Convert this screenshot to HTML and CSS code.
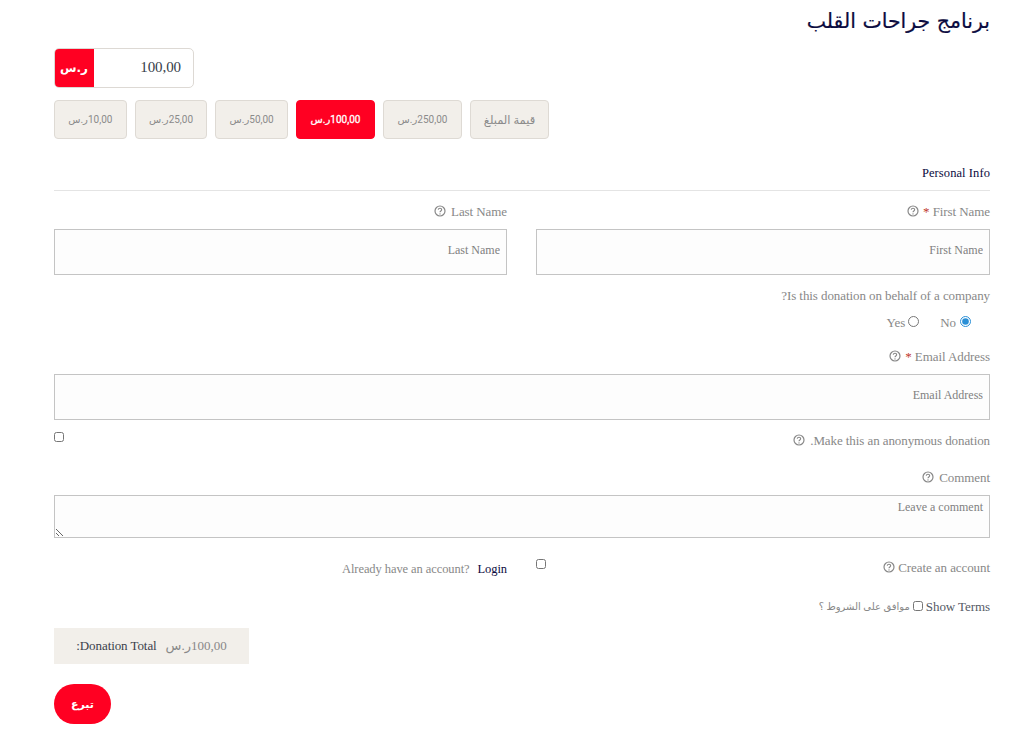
FILE: index.html
```html
<!DOCTYPE html>
<html lang="ar" dir="rtl">
<head>
<meta charset="utf-8">
<title>برنامج جراحات القلب</title>
<link rel="stylesheet" href="styles.css">
</head>
<body>
<svg class="sprite" width="0" height="0" aria-hidden="true">
  <symbol id="help" viewBox="0 0 12 12">
    <circle cx="6" cy="6" r="5" fill="none" stroke="currentColor" stroke-width="1.2"/>
    <path d="M4.3 4.8C4.3 3.8 5 3.2 6 3.2s1.7.6 1.7 1.5c0 1.2-1.7 1.3-1.7 2.5" fill="none" stroke="currentColor" stroke-width="1.1"/>
    <circle cx="6" cy="8.9" r=".7" fill="currentColor"/>
  </symbol>
</svg>
<main class="page">
  <h1 class="title">برنامج جراحات القلب</h1>

  <div class="amount">
    <span class="amount-currency">ر.س</span>
    <span class="amount-value">100,00</span>
  </div>

  <div class="levels">
    <button class="level level-custom">قيمة المبلغ</button>
    <button class="level">250,00ر.س</button>
    <button class="level level-active">100,00ر.س</button>
    <button class="level">50,00ر.س</button>
    <button class="level">25,00ر.س</button>
    <button class="level">10,00ر.س</button>
  </div>

  <div class="section-head">Personal Info</div>

  <div class="two-col">
    <div>
      <label class="label label-first">First Name <span class="req">*</span> <svg class="help"><use href="#help"/></svg></label>
      <input class="field" placeholder="First Name">
    </div>
    <div>
      <label class="label label-first">Last Name <svg class="help help-wide"><use href="#help"/></svg></label>
      <input class="field" placeholder="Last Name">
    </div>
  </div>

  <div class="label company">Is this donation on behalf of a company?</div>
  <div class="radios">
    <label class="radio radio-no">No <input type="radio" name="company" checked></label>
    <label class="radio">Yes <input type="radio" name="company"></label>
  </div>

  <label class="label email">Email Address <span class="req">*</span> <svg class="help"><use href="#help"/></svg></label>
  <input class="field" placeholder="Email Address">

  <div class="split anon">
    <label class="label-inline">Make this an anonymous donation. <svg class="help help-wide"><use href="#help"/></svg></label>
    <input class="check" type="checkbox">
  </div>

  <label class="label comment">Comment <svg class="help help-wide"><use href="#help"/></svg></label>
  <textarea class="field area" placeholder="Leave a comment"></textarea>

  <div class="two-col account">
    <div class="split">
      <label class="label-inline">Create an account <svg class="help help-tight"><use href="#help"/></svg></label>
      <input class="check" type="checkbox">
    </div>
    <div class="login">
      <a class="login-link" href="#">Login</a>
      <span dir="ltr">Already have an account?</span>
    </div>
  </div>

  <div class="terms">
    <span class="terms-show">Show Terms</span>
    <input class="check" type="checkbox">
    <span class="terms-ar">موافق على الشروط ؟</span>
  </div>

  <div class="total">
    <span>100,00ر.س</span>
    <span class="total-label">Donation Total:</span>
  </div>

  <button class="submit">تبرع</button>
</main>
</body>
</html>
```
FILE: styles.css
```css
* { box-sizing: border-box; }

html, body { margin: 0; background: #fff; }

body {
  font-family: "Liberation Serif", "DejaVu Sans", serif;
  font-size: 13px;
  line-height: 20px;
  letter-spacing: -0.08px;
  color: #888;
}

.sprite { position: absolute; }

.page {
  width: 1034px;
  padding: 8px 44px 0 54px;
  display: flex;
  flex-direction: column;
}

.title {
  margin: 0;
  font-family: "DejaVu Sans", sans-serif;
  font-size: 20.5px;
  line-height: 26px;
  font-weight: 400;
  letter-spacing: 0;
  -webkit-text-stroke: 0.2px #0b0b40;
  color: #0b0b40;
}

.amount {
  direction: ltr;
  align-self: flex-end;
  margin-top: 14px;
  width: 140px;
  height: 40px;
  display: flex;
  border: 1px solid #ddd9d4;
  border-radius: 5px;
  overflow: hidden;
}

.amount-currency {
  width: 40px;
  margin: -1px 0 -1px -1px;
  background: #ff0022;
  color: #fff;
  font-family: "DejaVu Sans", sans-serif;
  font-weight: 700;
  font-size: 12px;
  line-height: 40px;
  text-align: center;
}

.amount-value {
  flex: 1;
  padding-right: 12px;
  text-align: right;
  font-size: 15px;
  line-height: 36px;
  color: #36404a;
}

.levels {
  margin: 12px 441px 0 0;
  display: grid;
  grid-template-columns: 79px 79px 79px 1fr 1fr 1fr;
  gap: 8px;
}

.level {
  height: 39px;
  padding: 0;
  border: 1px solid #dedad4;
  border-radius: 4px;
  background: #f2efea;
  color: #8b8b8b;
  font-family: Roboto, "DejaVu Sans", sans-serif;
  font-size: 10px;
  letter-spacing: 0;
}

.level-custom { font-size: 11.5px; }

.level-active {
  background: #ff0022;
  border-color: #ff0022;
  color: #fff;
  -webkit-text-stroke: 0.3px #fff;
}

.section-head {
  margin-top: 24px;
  padding-bottom: 7px;
  border-bottom: 1px solid #e4e4e4;
  font-size: 12.5px;
  letter-spacing: 0.08px;
  color: #0b0b40;
}

.two-col {
  display: grid;
  grid-template-columns: 454px 453px;
  gap: 29px;
}

.section-head + .two-col { margin-top: 11px; }

.label { display: block; }

.label-first { margin-bottom: 7px; }

.req { color: #c0392b; }

.help {
  width: 12px;
  height: 12px;
  margin-right: 1px;
  vertical-align: -1px;
  color: #888;
}

.help-wide { margin-right: 2px; }

.help-tight { margin-right: 0; }

.field {
  display: block;
  width: 100%;
  height: 46px;
  padding: 0 6px 3px;
  border: 1px solid #c4c4c4;
  border-radius: 0;
  background: #fdfdfd;
  font: inherit;
  font-size: 12px;
  outline: none;
}

.field::placeholder { color: #808080; opacity: 1; }

.company { margin-top: 11px; }

.radios {
  margin-top: 7px;
  display: flex;
  gap: 21px;
  padding-right: 19px;
}

.radio {
  display: flex;
  flex-direction: row-reverse;
  justify-content: flex-end;
  align-items: center;
  gap: 3px;
}

.radio-no { gap: 4px; }

.radio input {
  width: 11px;
  height: 11px;
  margin: 0 0 4px;
  accent-color: #2a8fd6;
}

.email { margin: 14px 0 7px; }

.split {
  display: flex;
  justify-content: space-between;
  align-items: flex-start;
}

.anon { margin-top: 11px; height: 20px; }

.check {
  width: 10px;
  height: 10px;
  margin: 1px 0 0;
}

.comment { margin: 17px 0 7px; }

.area {
  height: 43px;
  padding: 1px 6px;
  resize: vertical;
}

.account { margin-top: 20px; }

.login {
  display: flex;
  gap: 8px;
  height: 20px;
  line-height: 22px;
  font-size: 12.5px;
}

.login-link { color: #0b0b40; text-decoration: none; }

.terms {
  margin-top: 19px;
  height: 20px;
  display: flex;
  align-items: center;
  gap: 3px;
}

.terms-show { color: #555a66; }

.terms-ar { font-size: 10px; }

.terms .check { margin: 0 0 3px; }

.total {
  margin-top: 11px;
  width: 195px;
  height: 36px;
  align-self: flex-end;
  display: flex;
  align-items: center;
  justify-content: center;
  gap: 9px;
  background: #f2efea;
}

.total-label { color: #3b3f4c; }

.submit {
  margin-top: 20px;
  align-self: flex-end;
  width: 57px;
  height: 40px;
  border: 0;
  border-radius: 20px;
  background: #ff0022;
  color: #fff;
  font-family: "DejaVu Sans", sans-serif;
  font-size: 11px;
  font-weight: 700;
}
```
